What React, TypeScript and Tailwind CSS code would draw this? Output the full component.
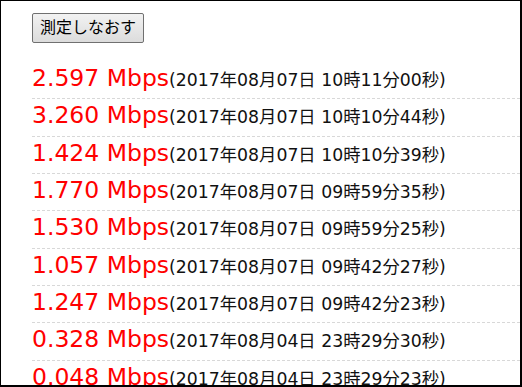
const rows = [
  { speed: '2.597', date: '(2017年08月07日 10時11分00秒)' },
  { speed: '3.260', date: '(2017年08月07日 10時10分44秒)' },
  { speed: '1.424', date: '(2017年08月07日 10時10分39秒)' },
  { speed: '1.770', date: '(2017年08月07日 09時59分35秒)' },
  { speed: '1.530', date: '(2017年08月07日 09時59分25秒)' },
  { speed: '1.057', date: '(2017年08月07日 09時42分27秒)' },
  { speed: '1.247', date: '(2017年08月07日 09時42分23秒)' },
  { speed: '0.328', date: '(2017年08月04日 23時29分30秒)' },
  { speed: '0.048', date: '(2017年08月04日 23時29分23秒)' },
];

export default function App() {
  return (
    <div
      className="w-[522px] h-[387px] overflow-hidden bg-white border-black border-l border-t border-r-2 border-b-2"
      style={{ fontFamily: '"DejaVu Sans", "Noto Sans CJK JP", sans-serif' }}
    >
      <div className="pl-[31px] pt-[12px]">
        <button className="h-[30px] w-[112px] rounded-[2px] border border-[#707070] bg-gradient-to-b from-[#f2f2f2] to-[#dcdcdc] text-[16px] text-black leading-none">
          測定しなおす
        </button>

        <div className="mt-[19px]">
          {rows.map((row, i) => (
            <div
              key={i}
              className="flex items-baseline h-[37.33px] border-b border-dashed border-[#d8d8d8] whitespace-nowrap"
            >
              <span className="text-[23.5px] leading-[32px] text-[#ff0000]">{row.speed} Mbps</span>
              <span className="text-[17.3px] text-[#111]">{row.date}</span>
            </div>
          ))}
        </div>
      </div>
    </div>
  );
}
